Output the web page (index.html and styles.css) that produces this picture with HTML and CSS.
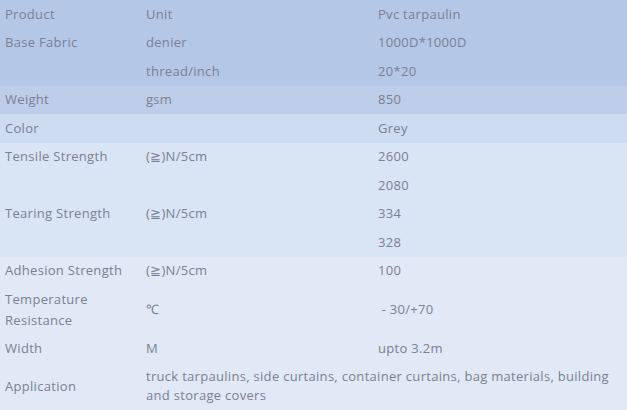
FILE: index.html
```html
<!DOCTYPE html>
<html>
<head>
<meta charset="utf-8">
<link rel="stylesheet" href="styles.css">
</head>
<body>
<table class="spec">
  <colgroup><col class="c1"><col class="c2"><col class="c3"></colgroup>
  <tbody>
    <tr class="g1"><td>Product</td><td>Unit</td><td>Pvc tarpaulin</td></tr>
    <tr class="g1"><td rowspan="2" class="top">Base Fabric</td><td>denier</td><td>1000D*1000D</td></tr>
    <tr class="g1"><td>thread/inch</td><td>20*20</td></tr>
    <tr class="g2"><td>Weight</td><td>gsm</td><td>850</td></tr>
    <tr class="g3"><td>Color</td><td></td><td>Grey</td></tr>
    <tr class="g4"><td rowspan="2" class="top">Tensile Strength</td><td rowspan="2" class="top">(≧)N/5cm</td><td>2600</td></tr>
    <tr class="g4"><td>2080</td></tr>
    <tr class="g4"><td rowspan="2" class="top">Tearing Strength</td><td rowspan="2" class="top">(≧)N/5cm</td><td>334</td></tr>
    <tr class="g4"><td>328</td></tr>
    <tr class="g5"><td>Adhesion Strength</td><td>(≧)N/5cm</td><td>100</td></tr>
    <tr class="g5"><td>Temperature Resistance</td><td>℃</td><td>&nbsp;- 30/+70</td></tr>
    <tr class="g5"><td>Width</td><td>M</td><td>upto 3.2m</td></tr>
    <tr class="g5"><td>Application</td><td colspan="2" class="app">truck tarpaulins, side curtains, container curtains, bag materials, building and storage covers</td></tr>
  </tbody>
</table>
</body>
</html>
```
FILE: styles.css
```css
html, body {
  margin: 0;
  padding: 0;
  background: #e0e9f5;
}
.spec {
  width: 627px;
  border-collapse: collapse;
  table-layout: fixed;
  font-family: "Open Sans", "Liberation Sans", sans-serif;
  font-size: 13px;
  letter-spacing: 0.3px;
  color: #7b8093;
}
.c1 { width: 141px; }
.c2 { width: 232px; }
.spec td {
  padding: 3.75px 5px;
  line-height: 21px;
  vertical-align: middle;
  text-align: left;
}
.spec td.top { vertical-align: top; }
.spec td.app { line-height: 19.5px; padding-right: 12px; }
.g1 { background: #b4c7e7; }
.g2 { background: #bdcdea; }
.g3 { background: #cddcf0; }
.g4 { background: #d9e4f5; }
.g5 { background: #e0e9f5; }
```
